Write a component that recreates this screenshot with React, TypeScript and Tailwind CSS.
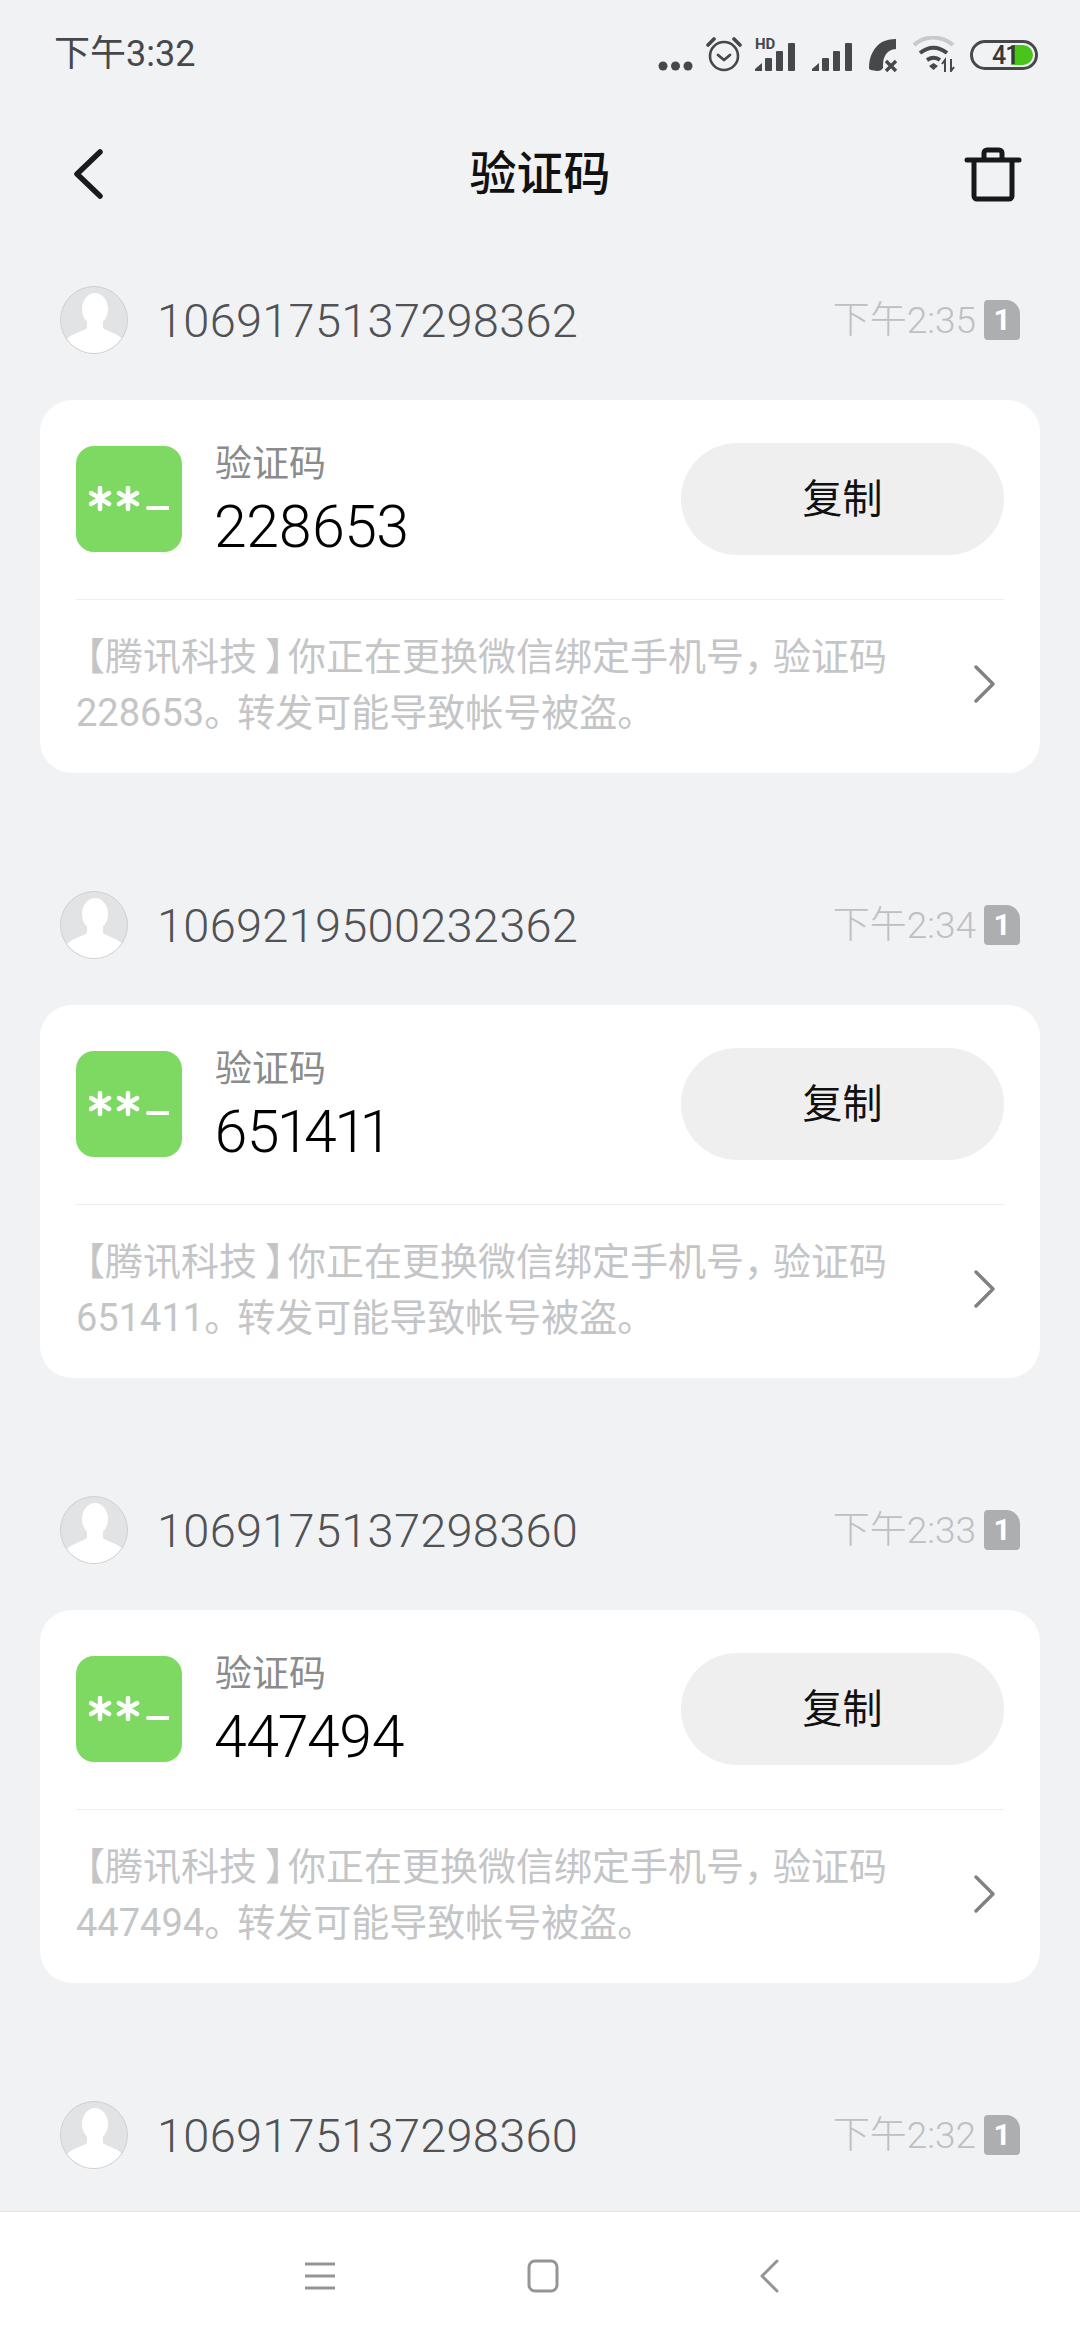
const FONT = "font-['Roboto','Noto_Sans_CJK_SC',sans-serif]";

const messages = [
  { sender: '1069175137298362', time: '下午2:35', code: '228653' },
  { sender: '1069219500232362', time: '下午2:34', code: '651411' },
  { sender: '1069175137298360', time: '下午2:33', code: '447494' },
];

function Signal({ hd }: { hd?: boolean }) {
  return (
    <svg width="41" height="36" viewBox="0 0 41 36" fill="#46484b">
      {hd && (
        <text x="0" y="13" fontSize="15" fontWeight="700" fontFamily="Roboto, sans-serif" fill="#46484b">
          HD
        </text>
      )}
      <path d="M0 35v-2l7-6v8z" />
      <rect x="10" y="22" width="7" height="13" rx="1" />
      <rect x="21" y="15" width="7" height="20" rx="1" />
      <rect x="33" y="7" width="7" height="28" rx="1" />
    </svg>
  );
}

function StatusIcons() {
  return (
    <div className="flex items-end">
      <svg width="36" height="10" viewBox="0 0 36 10" fill="#46484b" className="mb-[1px] mr-[12px]">
        <circle cx="5" cy="5" r="4.5" />
        <circle cx="17.500" cy="5" r="4.5" />
        <circle cx="30" cy="5" r="4.5" />
      </svg>
      <svg width="36" height="36" viewBox="0 0 36 36" fill="none" stroke="#46484b" className="mr-[13px]">
        <circle cx="18" cy="20" r="14" strokeWidth="2.6" />
        <path d="M12 19l6 5 6-5" strokeWidth="2.8" strokeLinecap="round" strokeLinejoin="round" />
        <path d="M2 9l6-6M34 9l-6-6" strokeWidth="3.6" strokeLinecap="round" />
      </svg>
      <div className="mr-[16px]">
        <Signal hd />
      </div>
      <div className="mr-[15px]">
        <Signal />
      </div>
      <svg width="30" height="34" viewBox="0 0 30 34" fill="#46484b" className="mr-[14px]">
        <path d="M28 1v10c-5 0-9 3-11 7-2 3-2 7-2 12-1 2-3 3-6 3l-6-1c-1 0-2-1-2-2 0-12 5-21 13-26 4-2 9-3 14-3z" />
        <path d="M18 23l10 10M28 23L18 33" stroke="#46484b" strokeWidth="3.4" fill="none" />
      </svg>
      <svg width="46" height="36" viewBox="0 0 46 36" fill="none" className="mr-[12px]">
        <path d="M2 9C13-1 29-1 41 9" stroke="#c9cacc" strokeWidth="4" />
        <path d="M8 17c9-7 18-7 27 0" stroke="#46484b" strokeWidth="4" />
        <path d="M15 24c5-3 9-3 13 0" stroke="#46484b" strokeWidth="4" />
        <path d="M17 30l4.500-3 4.500 3-4.500 4z" fill="#46484b" />
        <path d="M33 36V24l-3 4M39 23v12l3-4" stroke="#46484b" strokeWidth="2" />
      </svg>
      <div className="relative mb-[2px] flex h-[30px] w-[68px] items-center rounded-full border-[3px] border-[#46484b]">
        <div className="absolute top-[2px] right-[2px] h-[20px] w-[22px] rounded-r-full bg-[#49c41b]" />
        <span className="relative ml-[19px] text-[25px] leading-none font-medium tracking-[-1px] text-[#35373a]">41</span>
      </div>
    </div>
  );
}

function Avatar() {
  return (
    <div className="h-[68px] w-[68px] shrink-0 overflow-hidden rounded-full border border-[#cfd0d2] bg-[#e2e3e5]">
      <svg width="66" height="66" viewBox="0 0 66 66" fill="#ffffff">
        <ellipse cx="34" cy="22" rx="13" ry="16" />
        <path d="M26 34h16v7c5 4 15 5 20 12v13H5V53c6-7 16-8 21-12z" />
      </svg>
    </div>
  );
}

function SimBadge() {
  return (
    <div className="flex h-[40px] w-[36px] items-center justify-center rounded-[4px] rounded-tr-[14px] bg-[#adaeb0] text-[30px] leading-none font-bold text-white">
      1
    </div>
  );
}

function SenderRow({ sender, time }: { sender: string; time: string }) {
  return (
    <div className="flex h-[68px] items-center px-[60px]">
      <Avatar />
      <span className="ml-[29px] flex-1 pt-[2px] text-[47px] tracking-[0.25px] font-light text-[#505255]">{sender}</span>
      <span className="pt-[2px] text-[37px] font-light text-[#bfc0c2]">{time}</span>
      <div className="ml-[8px]">
        <SimBadge />
      </div>
    </div>
  );
}

function MessageBlock({ sender, time, code }: { sender: string; time: string; code: string }) {
  return (
    <section className="mb-[118px]">
      <SenderRow sender={sender} time={time} />
      <div className="mx-[40px] mt-[46px] h-[373px] rounded-[32px] bg-white px-[36px]">
        <div className="flex h-[200px] items-start border-b border-[#efefef] pt-[43px]">
          <div className="mt-[3px] flex h-[106px] w-[106px] shrink-0 items-center justify-center rounded-[18px] bg-[#7dd961]">
            <svg width="80" height="26" viewBox="0 0 80 26" stroke="#fff" strokeWidth="4.500" strokeLinecap="round">
              <path d="M11 2v21M2 7l18 11M20 7L2 18M39 2v21M30 7l18 11M48 7L30 18" />
              <path d="M59 22h20" strokeWidth="4" />
            </svg>
          </div>
          <div className="ml-[33px] flex-1">
            <div className="text-[37px] leading-[44px] text-[#8a8b8d]">验证码</div>
            <div className="mt-[6px] ml-[-1px] text-[59px] leading-[68px] font-light tracking-[-0.6px] text-black proportional-nums">{code}</div>
          </div>
          <button className="flex h-[112px] w-[323px] items-center justify-center rounded-full bg-[#efefef] pt-[2px] text-[40px] text-[#111]">
            复制
          </button>
        </div>
        <div className="flex items-center pt-[29px]">
          <p className="w-[860px] text-[38px] leading-[56px] text-[#c4c5c7]">
            <span className="mr-0 ml-[10px] [font-feature-settings:'halt']">【</span>腾讯科技
            <span className="mr-[4px] ml-[8px] [font-feature-settings:'halt']">】</span>你正在更换微信绑定手机号
            <span className="mr-[10px] [font-feature-settings:'halt']">，</span>验证码 {code}
            <span className="mr-[14px] [font-feature-settings:'halt']">。</span>转发可能导致帐号被盗。
          </p>
          <svg width="22" height="38" viewBox="0 0 22 38" fill="none" stroke="#808184" strokeWidth="3.4" className="mb-[3px] ml-[37px]" strokeLinecap="round" strokeLinejoin="round">
            <path d="M3 2l17 17L3 36" />
          </svg>
        </div>
      </div>
    </section>
  );
}

export default function App() {
  return (
    <div className={`${FONT} flex h-[2340px] w-[1080px] flex-col overflow-hidden bg-[#f1f2f4]`}>
      <div className="flex h-[104px] shrink-0 items-center justify-between pt-[4px] pr-[42px] pl-[54px]">
        <span className="text-[36px] text-[#46484b]">下午3:32</span>
        <StatusIcons />
      </div>
      <div className="flex h-[140px] shrink-0 items-center px-[58px]">
        <div className="flex-1">
          <svg width="30" height="50" viewBox="0 0 30 50" fill="none" stroke="#1a1b1d" strokeWidth="5.500" strokeLinecap="round" strokeLinejoin="round" className="ml-[15px]">
            <path d="M27 3L4 25l23 22" />
          </svg>
        </div>
        <h1 className="text-[47px] font-medium text-[#111]">验证码</h1>
        <div className="flex flex-1 justify-end">
          <svg width="58" height="56" viewBox="0 0 58 56" fill="none" stroke="#17181a" strokeWidth="5">
            <path d="M3 14h52" strokeLinecap="round" />
            <path d="M10 14v36a3 3 0 0 0 3 3h32a3 3 0 0 0 3-3V14" />
            <path d="M20 13V7a3 3 0 0 1 3-3h12a3 3 0 0 1 3 3v6" />
          </svg>
        </div>
      </div>
      <div className="flex-1 overflow-hidden pt-[42px]">
        {messages.map((m) => (
          <MessageBlock key={m.time} {...m} />
        ))}
        <section>
          <SenderRow sender="1069175137298360" time="下午2:32" />
        </section>
      </div>
      <div className="flex h-[129px] shrink-0 items-center border-t border-[#e4e4e6] bg-white">
        <div className="ml-[305px]">
          <svg width="30" height="30" viewBox="0 0 30 30" fill="none" stroke="#949597" strokeWidth="3" className="block">
            <path d="M0 3h30M0 15h30M0 27h30" />
          </svg>
        </div>
        <div className="ml-[192px]">
          <svg width="32" height="34" viewBox="0 0 32 34" fill="none" stroke="#949597" strokeWidth="3" className="block">
            <rect x="2" y="2" width="28" height="30" rx="6" />
          </svg>
        </div>
        <div className="ml-[201px]">
          <svg width="20" height="34" viewBox="0 0 20 34" fill="none" stroke="#949597" strokeWidth="3" strokeLinecap="round" strokeLinejoin="round" className="block">
            <path d="M17 2L2 17l15 15" />
          </svg>
        </div>
      </div>
    </div>
  );
}
